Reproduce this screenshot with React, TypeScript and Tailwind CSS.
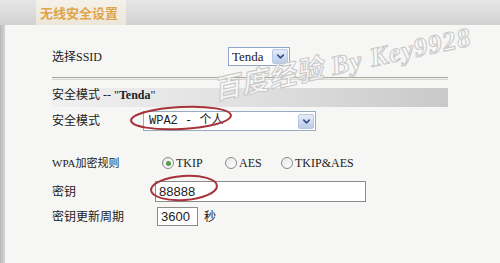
import { ChevronDown } from "lucide-react";

// TYPES
type Radio = { label: string; checked?: boolean; w: string };

const radios: Radio[] = [
    { label: "TKIP", checked: true, w: "w-[63px]" },
    { label: "AES", w: "w-[56px]" },
    { label: "TKIP&AES", w: "w-auto" },
];

const SelectArrow = () => (
    <div className="w-[16px] h-[15px] mr-[1px] rounded-[2px] border border-[#b4c8e8] bg-gradient-to-b from-[#e4ecf8] to-[#bccbe6] flex items-center justify-center">
        <ChevronDown size={11} strokeWidth={3.5} className="text-[#3a4f8a]" />
    </div>
);

const App = () => {
    return (
        <div
            className="relative w-[500px] h-[263px] overflow-hidden bg-[#f6f6f4] text-[12px] text-[#222]"
            style={{ fontFamily: '"Liberation Serif", "Noto Sans CJK SC", serif' }}
        >
            {/* header */}
            <div className="h-[25px] flex bg-gradient-to-b from-[#e6e6e6] to-[#d2d2d2]">
                <div className="w-[36px]" />
                <div className="w-[90px] bg-gradient-to-b from-[#f6f2ea] to-[#ece6da] flex items-center pl-[4px] whitespace-nowrap">
                    <span
                        className="text-[13px] font-bold leading-none text-[#dfa54a]"
                        style={{ fontFamily: '"Noto Sans CJK SC", sans-serif' }}
                    >
                        无线安全设置
                    </span>
                </div>
            </div>

            <div className="flex h-[238px]">
                <div className="w-[5px] bg-gradient-to-r from-[#b8b8b8] to-[#d4d4d4]" />
                <div className="flex-1 pl-[47px] pt-[22px]">
                    {/* ssid */}
                    <div className="flex items-center h-[19px]">
                        <div className="w-[176px] leading-none">选择SSID</div>
                        <div className="w-[62px] h-[19px] bg-white border border-[#8ea6c6] flex items-center justify-between pl-[3px]">
                            <span className="text-[13px] leading-none">Tenda</span>
                            <SelectArrow />
                        </div>
                    </div>

                    <div className="mt-[11px] w-[396px] h-[3px] border-t border-[#a8a8a8] border-b border-b-[#d8d8d0] bg-[#f0f0ea]" />

                    {/* security title bar */}
                    <div className="mt-[8px] w-[396px] h-[19px] bg-gradient-to-r from-[#f0f0f0] via-[#e0e0e0] to-[#c9c9c9] leading-[14px]">
                        安全模式 -- "<span className="font-bold">Tenda</span>"
                    </div>

                    {/* mode */}
                    <div className="mt-[4px] flex items-center h-[20px]">
                        <div className="w-[91px] leading-none">安全模式</div>
                        <div className="w-[173px] h-[20px] bg-white border border-[#9aaac0] flex items-center justify-between pl-[5px]">
                            <span className="leading-none" style={{ fontFamily: '"Liberation Mono", "Noto Sans CJK SC", monospace' }}>
                                WPA2 - 个人
                            </span>
                            <SelectArrow />
                        </div>
                    </div>

                    {/* cipher */}
                    <div className="mt-[24px] flex items-center h-[16px]">
                        <div className="w-[110px] leading-none text-[11px]">WPA加密规则</div>
                        {radios.map((r) => (
                            <div key={r.label} className={`flex items-center ${r.w}`}>
                                <div className="w-[12px] h-[12px] rounded-full border border-[#8a8a8a] bg-gradient-to-br from-[#e8e8e8] to-white flex items-center justify-center">
                                    {r.checked && <div className="w-[5px] h-[5px] rounded-full bg-[#5a9a4a]" />}
                                </div>
                                <span className="ml-[2px] leading-none">{r.label}</span>
                            </div>
                        ))}
                    </div>

                    {/* key */}
                    <div className="mt-[10px] flex items-center h-[21px]">
                        <div className="w-[103px] leading-none">密钥</div>
                        <div className="w-[211px] h-[21px] bg-white border border-[#8c8c8c] flex items-center pl-[3px]">
                            <span className="text-[13px] leading-none" style={{ fontFamily: '"Liberation Sans", sans-serif' }}>
                                88888
                            </span>
                        </div>
                    </div>

                    {/* period */}
                    <div className="mt-[5px] flex items-center h-[19px]">
                        <div className="w-[105px] leading-none">密钥更新周期</div>
                        <div className="w-[41px] h-[19px] bg-white border border-[#8c8c8c] flex items-center pl-[3px]">
                            <span className="text-[13px] leading-none" style={{ fontFamily: '"Liberation Sans", sans-serif' }}>
                                3600
                            </span>
                        </div>
                        <span className="ml-[6px] leading-none">秒</span>
                    </div>
                </div>
            </div>

            {/* watermark */}
            <div
                className="absolute left-[214px] top-[76px] -rotate-[12deg] origin-left italic text-[27px] leading-[30px] tracking-[1px] font-bold text-[#fbfbfb]/80 whitespace-nowrap pointer-events-none"
                style={{ WebkitTextStroke: "1px #c8c8c8", fontFamily: '"Liberation Serif", "Noto Sans CJK SC", serif' }}
            >
                百度经验 By Key9928
            </div>

            {/* red marks */}
            <svg className="absolute left-0 top-0" width="500" height="263">
                <ellipse cx="181" cy="118" rx="50" ry="11" fill="none" stroke="#a8323a" strokeWidth="2" transform="rotate(-3 181 118)" />
                <ellipse cx="184" cy="188" rx="33" ry="12" fill="none" stroke="#a8323a" strokeWidth="2" transform="rotate(-4 184 188)" />
            </svg>
        </div>
    );
};

export default App;
